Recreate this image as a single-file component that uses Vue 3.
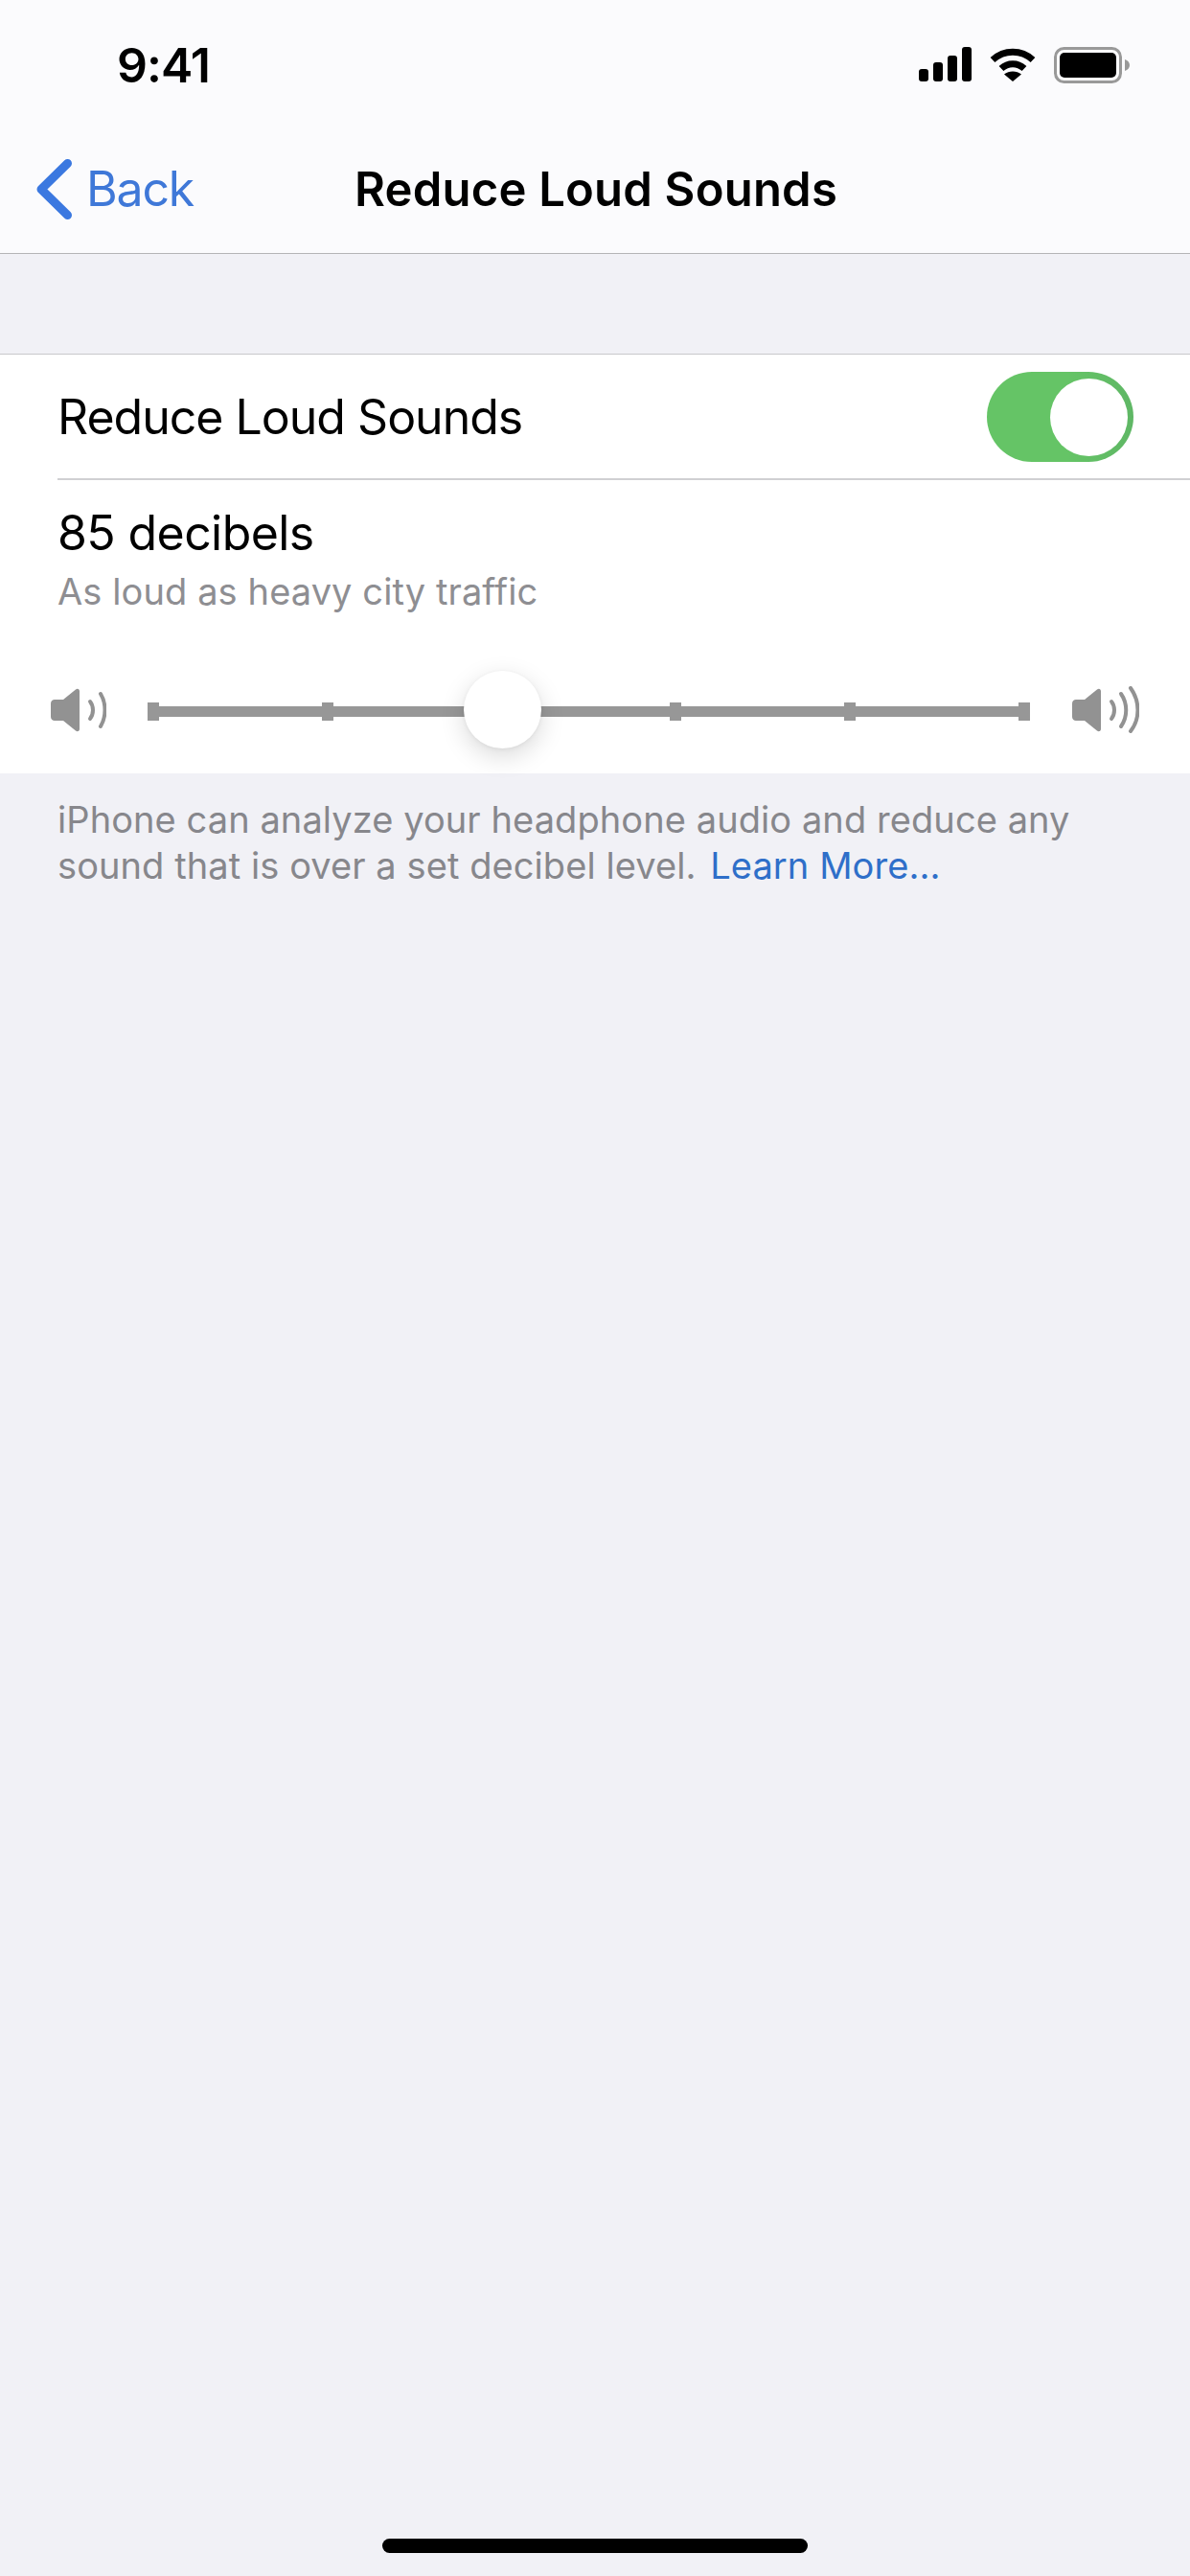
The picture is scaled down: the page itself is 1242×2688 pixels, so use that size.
<template>
  <div class="screen">
    <header class="top-bar">
      <div class="status-bar">
        <span class="time">9:41</span>
        <div class="status-icons">
          <svg class="signal" width="55" height="36" viewBox="0 0 55 36">
            <rect x="0" y="23" width="10" height="13" rx="3" />
            <rect x="15" y="16" width="10" height="20" rx="3" />
            <rect x="30" y="9" width="10" height="27" rx="3" />
            <rect x="45" y="0" width="10" height="36" rx="3" />
          </svg>
          <svg class="wifi" width="48" height="36" viewBox="0 0 48 36">
            <path d="M3 13.5C15 2.5 33 2.5 45 13.5" fill="none" stroke="#000" stroke-width="7" />
            <path d="M12 22.5C19 16 29 16 36 22.5" fill="none" stroke="#000" stroke-width="7" />
            <path d="M24 36L15 28.5C20 24.5 28 24.5 33 28.5Z" />
          </svg>
          <svg class="battery" width="80" height="38" viewBox="0 0 80 38">
            <rect x="1.5" y="1.5" width="68" height="35" rx="9" fill="none" stroke="#999" stroke-width="3" />
            <rect x="6" y="6" width="59" height="26" rx="5" />
            <path d="M74 13C77 14 79 16 79 19C79 22 77 24 74 25Z" fill="#999" />
          </svg>
        </div>
      </div>
      <nav class="nav-bar">
        <a class="back">
          <svg width="39" height="65" viewBox="0 0 39 65">
            <path d="M33.5 5.5L6 32.5L33.5 59.5" fill="none" stroke="#3b78e0" stroke-width="9" stroke-linecap="round" stroke-linejoin="round" />
          </svg>
          <span>Back</span>
        </a>
        <h1 class="title">Reduce Loud Sounds</h1>
      </nav>
    </header>

    <section class="group">
      <div class="row toggle-row">
        <span class="row-label">Reduce Loud Sounds</span>
        <div class="toggle"><div class="toggle-knob"></div></div>
      </div>
      <div class="level">
        <div class="level-value">{{ level.value }}</div>
        <div class="level-desc">{{ level.desc }}</div>
      </div>
      <div class="slider-row">
        <svg class="speaker-low" width="58" height="46" viewBox="0 0 58 46" fill="none">
          <path d="M4 12H13L26 1.5C28 0 30 1 30 3.500V42.500C30 45 28 46 26 44.500L13 34H4C2 34 0 32.500 0 30V16C0 13.500 2 12 4 12Z" fill="#929292" />
          <path d="M41 14C45 19 45 27 41 32" stroke="#929292" stroke-width="4" stroke-linecap="round" />
          <path d="M52 6C58 16 58 30 52 40" stroke="#929292" stroke-width="4" stroke-linecap="round" />
        </svg>
        <div class="slider">
          <div class="track"></div>
          <div class="ticks">
            <span v-for="(t, i) in ticks" :key="t" class="tick" :class="{ end: i === 0 || i === ticks.length - 1 }"></span>
          </div>
          <div class="thumb"></div>
        </div>
        <svg class="speaker-high" width="70" height="49" viewBox="0 0 70 49" fill="none">
          <path d="M4 14H13L26 3.500C28 2 30 3 30 5.500V44.500C30 47 28 48 26 46.500L13 36H4C2 36 0 34.500 0 32V18C0 15.500 2 14 4 14Z" fill="#929292" />
          <path d="M41 16C45 21 45 29 41 34" stroke="#929292" stroke-width="4" stroke-linecap="round" />
          <path d="M51 8C58 18 58 32 51 42" stroke="#929292" stroke-width="4" stroke-linecap="round" />
          <path d="M61 2C71 16 71 34 61 47" stroke="#929292" stroke-width="4" stroke-linecap="round" />
        </svg>
      </div>
    </section>

    <p class="footnote">
      iPhone can analyze your headphone audio and reduce any<br />
      sound that is over a set decibel level. <a class="link">Learn More...</a>
    </p>

    <div class="home-indicator"></div>
  </div>
</template>

<script setup>
const level = { value: '85 decibels', desc: 'As loud as heavy city traffic' }
const ticks = [75, 80, 85, 90, 95, 100]
</script>

<style>
html,
body {
  margin: 0;
  background: #f1f1f6;
}
</style>

<style scoped>
.screen {
  position: relative;
  width: 1242px;
  height: 2688px;
  overflow: hidden;
  background: #f1f1f6;
  font-family: Inter, "Liberation Sans", sans-serif;
  color: #000;
}

.top-bar {
  height: 265px;
  box-sizing: border-box;
  background: #fbfbfd;
  border-bottom: 1px solid #b4b4b6;
}

.status-bar {
  display: flex;
  justify-content: space-between;
  align-items: flex-start;
  height: 132px;
  padding: 49px 62px 0 122px;
  box-sizing: border-box;
}

.time {
  font-size: 50px;
  font-weight: 600;
  line-height: 38px;
  letter-spacing: -1px;
}

.status-icons {
  display: flex;
  align-items: flex-start;
  gap: 19px;
}

.status-icons svg {
  display: block;
}

.nav-bar {
  position: relative;
  display: flex;
  align-items: center;
  justify-content: center;
  height: 132px;
}

.back {
  position: absolute;
  left: 37px;
  top: 33px;
  display: flex;
  align-items: center;
  gap: 14px;
  color: #3f78d8;
  font-size: 50px;
  line-height: 65px;
  letter-spacing: -1.2px;
}

.back svg {
  display: block;
}

.title {
  margin: 0 0 2px 2px;
  font-size: 49px;
  font-weight: 600;
  line-height: 65px;
  letter-spacing: 0.2px;
}

.group {
  margin-top: 104px;
  height: 438px;
  box-sizing: border-box;
  background: #fff;
  border-top: 1px solid #c8c8cb;
}

.row {
  display: flex;
  align-items: center;
  justify-content: space-between;
  height: 131px;
  margin-left: 60px;
  padding-right: 59px;
  box-sizing: border-box;
  border-bottom: 2px solid #d0d0d3;
}

.row-label,
.level-value {
  font-size: 50px;
  line-height: 60px;
  letter-spacing: -1px;
}

.toggle {
  position: relative;
  width: 153px;
  height: 94px;
  border-radius: 47px;
  background: linear-gradient(90deg, #65c466 55%, #5fb765);
}

.toggle-knob {
  position: absolute;
  top: 7px;
  right: 6px;
  width: 81px;
  height: 81px;
  border-radius: 50%;
  background: #fff;
}

.level {
  padding: 25px 0 0 60px;
}

.level-value {
  letter-spacing: -0.6px;
}

.level-desc {
  margin-top: 8px;
  font-size: 38px;
  line-height: 46px;
  letter-spacing: 0.1px;
  color: #8e8e92;
}

.slider-row {
  display: flex;
  align-items: center;
  margin-top: 76px;
  padding-left: 53px;
}

.slider {
  position: relative;
  width: 921px;
  height: 19px;
  margin: 4px 44px 0 43px;
}

.track {
  position: absolute;
  left: 0;
  right: 0;
  top: 4px;
  height: 11px;
  background: #979797;
}

.ticks {
  position: relative;
  display: flex;
  justify-content: space-between;
  align-items: center;
  height: 19px;
}

.tick {
  width: 12px;
  height: 19px;
  background: #979797;
}

.thumb {
  position: absolute;
  left: 330px;
  top: -33px;
  width: 81px;
  height: 81px;
  border-radius: 50%;
  background: #fff;
  box-shadow: 0 8px 26px rgba(0, 0, 0, 0.15), 0 1px 4px rgba(0, 0, 0, 0.06);
}

.footnote {
  margin: 24px 0 0 60px;
  font-size: 38px;
  line-height: 48px;
  letter-spacing: 0.08px;
  color: #87878c;
}

.link {
  margin-left: 4px;
  color: #2f6fc9;
}

.home-indicator {
  position: absolute;
  left: 399px;
  bottom: 24px;
  width: 444px;
  height: 15px;
  border-radius: 8px;
  background: #000;
}
</style>
